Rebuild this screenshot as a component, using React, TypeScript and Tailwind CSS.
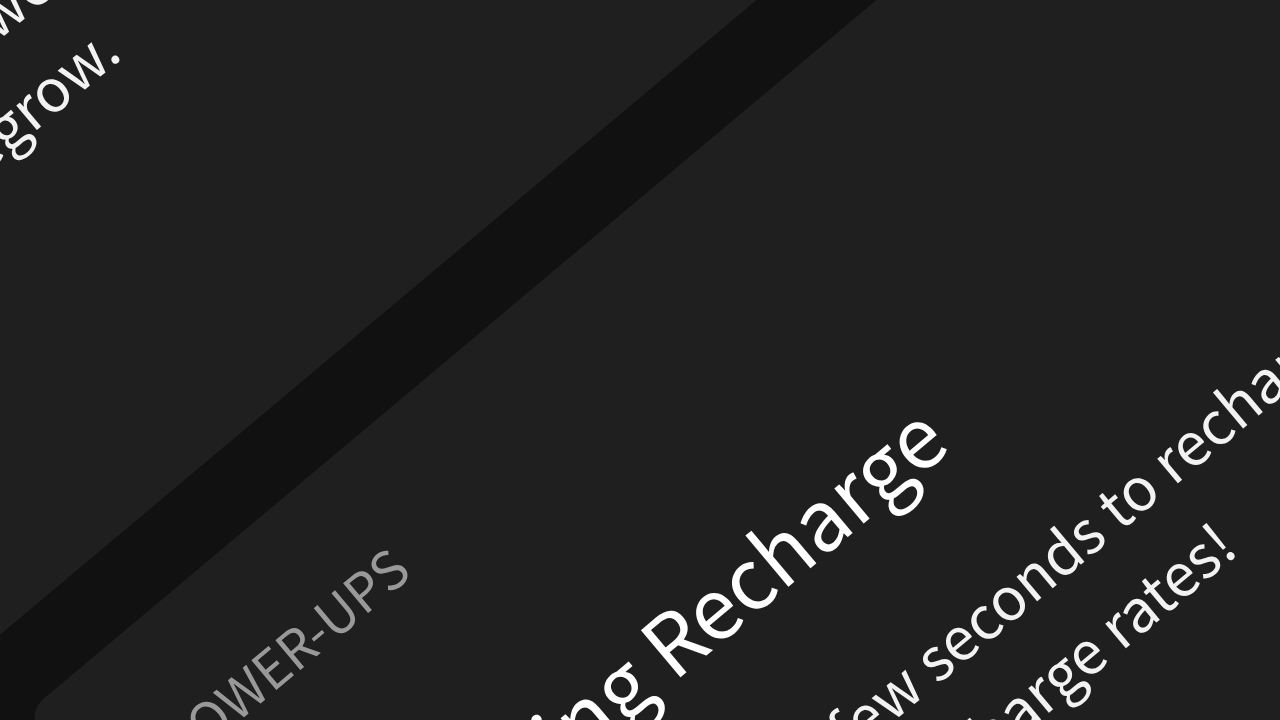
export default function App() {
  return (
    <main className="relative h-screen w-full overflow-hidden bg-[#111111] font-['Noto_Sans_CJK_SC','Open_Sans',sans-serif]">
      <div className="absolute top-0 left-0 flex w-[150vw] origin-top-left -translate-x-[364px] translate-y-[251px] -rotate-40 flex-col gap-[77px] text-[59px] leading-[93px] text-[#f2f2f2]">
        <section className="rounded-3xl bg-[#1f1f1f] pb-[342px]">
          <p className="pl-[410px]">we</p>
          <p className="pl-[292px]">regrow.</p>
        </section>
        <section className="rounded-3xl bg-[#1f1f1f] pt-[74px] pb-[300px]">
          <h3 className="pl-[84px] text-[53px] leading-[93px] text-[#999999]">POWER-UPS</h3>
          <h2 className="mt-[130px] pl-[127px] text-[84px] leading-[120px] text-white">Lightning Recharge</h2>
          <div className="mt-[75px]">
            <p className="pl-[606px]">few seconds to recharge</p>
            <p className="pl-[626px]">recharge rates!</p>
          </div>
        </section>
      </div>
    </main>
  );
}
